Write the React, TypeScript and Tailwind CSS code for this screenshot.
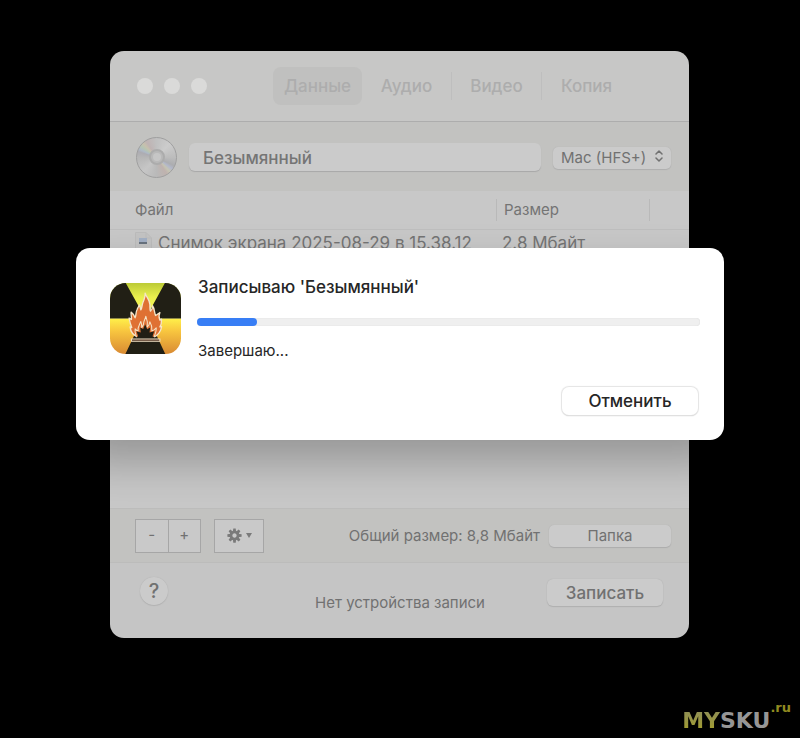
import clsx from "clsx";

const TABS = ["Данные", "Аудио", "Видео", "Копия"];

const FlameIcon = () => (
  <svg viewBox="20 20 212 212" className="h-[71px] w-[71px] shrink-0" aria-hidden="true">
    <defs>
      <clipPath id="tile">
        <rect x="20" y="20" width="212" height="212" rx="47" />
      </clipPath>
      <linearGradient id="lime" x1="0" y1="0" x2="0" y2="1">
        <stop offset="0" stopColor="#bccb36" />
        <stop offset="0.4" stopColor="#e9ef4e" />
        <stop offset="1" stopColor="#fdf85c" />
      </linearGradient>
      <linearGradient id="amber" x1="0" y1="0" x2="0" y2="1">
        <stop offset="0" stopColor="#fff04a" />
        <stop offset="0.35" stopColor="#f8c63f" />
        <stop offset="1" stopColor="#d98a33" />
      </linearGradient>
    </defs>
    <g clipPath="url(#tile)">
      <rect x="20" y="20" width="212" height="106" fill="url(#lime)" />
      <rect x="20" y="126" width="212" height="106" fill="url(#amber)" />
      <path d="M20 20H67L126 126H20ZM232 20H184L126 126H232ZM126 106L66 232H185Z" fill="#211f15" />
      <path
        d="M125 50C128 62 138 69 139 83C140 91 138 97 141 104C145 101 147 95 147 88C153 96 152 107 156 117C160 115 164 111 169 108C165 116 166 124 169 131L174 128C174 139 173 145 169 151L174 150C172 165 163 176 149 183H107C89 177 81 166 80 151L85 153C81 144 79 136 77 125L84 129C85 121 82 115 83 107C90 112 93 118 95 124C99 115 96 108 101 99C103 93 106 90 108 85L112 100C116 95 115 87 118 79C122 70 126 61 125 50Z"
        fill="#df7133"
        stroke="#f5e5c9"
        strokeWidth="4"
        strokeLinejoin="round"
      />
      <path
        d="M100 185C98 176 93 169 95 157C98 161 101 163 104 163C102 151 108 145 112 135C115 142 114 148 115 153C118 148 121 144 121 137C122 129 126 127 127 119C131 129 133 139 131 152C135 149 138 143 139 136C144 144 146 151 145 163C150 162 154 159 158 154C159 165 154 175 150 185Z"
        fill="#df7133"
        stroke="#f5e5c9"
        strokeWidth="3"
        strokeLinejoin="round"
      />
      <path d="M90 188L104 179L99 164L112 168L110 153L119 157L125 143L131 158L140 153L138 168L152 164L147 179L162 188Z" fill="#211f15" />
      <path d="M84 187H169V194H84Z" fill="#4a2c1c" stroke="#f5e5c9" strokeWidth="3" />
    </g>
  </svg>
);

const DiscIcon = () => (
  <div className="flex h-[41px] w-[41px] shrink-0 items-center justify-center rounded-full border border-[#9f9f9f] bg-[conic-gradient(from_0deg,#c0c0c0,#cccccc_12%,#bcbcbc_25%,#acadb0_32%,#b3b8ca_35%,#c5c4b3_38%,#bfb2ae_41%,#b9b9b9_50%,#c6c6c6_62%,#b6b6b6_75%,#adacb2_80%,#aeb9c6_82%,#b6c4b3_85%,#c7c0ad_88%,#bfb3b3_91%,#c0c0c0)]">
    <div className="flex h-4 w-4 items-center justify-center rounded-full border-2 border-[#acacac] bg-[#b9b9b9]">
      <div className="h-2 w-2 rounded-full bg-[#c6c6c6]" />
    </div>
  </div>
);

const GearIcon = () => (
  <svg viewBox="-10 -10 20 20" className="h-[15px] w-[15px]" aria-hidden="true">
    <g fill="#7a7a7a">
      {[0, 45, 90, 135, 180, 225, 270, 315].map((angle) => (
        <path key={angle} d="M-1.6 -9.5H1.6L2.2 -5H-2.2Z" transform={`rotate(${angle})`} />
      ))}
    </g>
    <circle r="4.7" fill="none" stroke="#7a7a7a" strokeWidth="3.6" />
  </svg>
);

const Toolbar = () => (
  <header className="flex h-[71px] items-center border-b border-[#adadad] bg-[#c7c7c6] pl-[27px]">
    <div className="flex gap-[11px]">
      {["Закрыть", "Свернуть", "Развернуть"].map((label) => (
        <button key={label} aria-label={label} className="h-4 w-4 rounded-full bg-[#dadad9]" />
      ))}
    </div>
    <nav className="ml-[66px] flex items-center">
      {TABS.map((tab, i) => (
        <div key={tab} className="flex items-center">
          {i > 1 && <span className="h-7 w-px bg-[#bebebe]" />}
          <button
            className={clsx(
              "h-[38px] w-[89px] rounded-lg pt-px text-[17px] font-medium text-[#adadad]",
              i === 0 && "bg-[#c0c0bf]",
            )}
          >
            {tab}
          </button>
        </div>
      ))}
    </nav>
  </header>
);

const DiscBar = () => (
  <div className="flex h-[69px] items-center gap-3 bg-[#c2c2c0] pl-[26px] pr-[18px] pt-px">
    <DiscIcon />
    <input
      aria-label="Имя диска"
      defaultValue="Безымянный"
      className="h-7 min-w-0 flex-1 rounded-md bg-[#cbcbcb] px-[14px] pt-px text-[17px] font-medium text-[#757575] shadow-[0_1px_1px_#a8a8a8] outline-none"
    />
    <div className="relative">
      <select
        aria-label="Файловая система"
        className="h-[22px] w-[118px] appearance-none rounded-[5px] bg-[#cbcbcb] pl-2 text-[15px] leading-5 text-[#717171] shadow-[0_0_1px_#aaaaaa,0_1px_1px_#b0b0b0]"
      >
        <option>Mac (HFS+)</option>
      </select>
      <svg viewBox="0 0 8 12" className="pointer-events-none absolute right-2 top-[5px] h-3 w-2" aria-hidden="true">
        <path d="M1 4L4 1L7 4M1 8L4 11L7 8" fill="none" stroke="#717171" strokeWidth="1.5" strokeLinecap="round" strokeLinejoin="round" />
      </svg>
    </div>
  </div>
);

const FileTable = () => (
  <div className="h-[317px] bg-[#c8c8c8]">
    <table className="w-full table-fixed border-collapse text-left text-[#747474]">
      <thead className="h-[38px] border-b border-[#bebebe] text-[15px]">
        <tr>
          <th className="pl-[25px] font-normal">Файл</th>
          <th className="w-[153px] p-0 font-normal">
            <div className="flex h-[22px] items-center border-l border-[#b9b9b9] pl-[7px] leading-5">Размер</div>
          </th>
          <th className="w-10 p-0">
            <div className="h-[22px] border-l border-[#b9b9b9]" />
          </th>
        </tr>
      </thead>
      <tbody className="text-[17px] leading-6">
        <tr>
          <td className="pl-[25px] pt-px">
            <div className="flex items-center gap-[6px] whitespace-nowrap">
              <svg viewBox="0 0 17 22" className="h-[22px] w-[17px]" aria-hidden="true">
                <path d="M0.5 0.5H11L16.5 6V21.5H0.5Z" fill="#c4c4c4" stroke="#bcbcbc" />
                <path d="M11 0.5V6H16.5" fill="none" stroke="#bcbcbc" />
                <path d="M4 6H12V10H4Z" fill="#a3b0c5" />
                <path d="M4 10H12V12H4Z" fill="#68727e" />
              </svg>
              Снимок экрана 2025-08-29 в 15.38.12
            </div>
          </td>
          <td className="pl-[6px] pt-px">2.8 Мбайт</td>
          <td />
        </tr>
      </tbody>
    </table>
  </div>
);

const ActionBar = () => (
  <div className="flex h-[55px] items-center border-y border-[#bcbcbb] bg-[#c2c2c0] pl-[25px] pr-[18px] text-[#717171]">
    <div className="flex h-[34px] w-[66px] divide-x divide-[#a6a6a6] border border-[#a6a6a6] bg-[#c9c9c9] text-[15px]">
      <button aria-label="Удалить" className="flex-1">-</button>
      <button aria-label="Добавить" className="flex-1">+</button>
    </div>
    <button
      aria-label="Действия"
      className="ml-[13px] flex h-[34px] w-[50px] items-center justify-center gap-1 border border-[#a6a6a6] bg-[#c9c9c9]"
    >
      <GearIcon />
      <svg viewBox="0 0 6 5" className="h-[5px] w-[6px]" aria-hidden="true">
        <path d="M0 0H6L3 5Z" fill="#7a7a7a" />
      </svg>
    </button>
    <p className="ml-auto text-[15px] leading-5">Общий размер: 8,8 Мбайт</p>
    <button className="ml-[9px] h-[22px] w-[122px] rounded-[5px] bg-[#cbcbcb] text-[15px] leading-5 shadow-[0_0_1px_#aaaaaa,0_1px_1px_#adadad]">
      Папка
    </button>
  </div>
);

const Footer = () => (
  <footer className="flex h-[75px] items-start bg-[#c5c5c5] pl-[30px] pr-[26px] pt-[14px] text-[#717171]">
    <button
      aria-label="Справка"
      className="h-7 w-7 rounded-full bg-[#cbcbcb] text-xl font-medium leading-7 shadow-[0_0_1px_#aaaaaa,0_1px_1px_#b4b4b4]"
    >
      ?
    </button>
    <p className="ml-auto pt-4 text-[15px] leading-5">Нет устройства записи</p>
    <button className="ml-[62px] mt-[2px] h-[27px] w-[116px] rounded-md bg-[#cbcbcb] text-[17px] font-medium leading-6 shadow-[0_0_1px_#aaaaaa,0_1px_1px_#b0b0b0]">
      Записать
    </button>
  </footer>
);

const BurnDialog = ({ progress }: { progress: number }) => (
  <section
    role="dialog"
    aria-labelledby="burn-title"
    className="absolute -left-[34px] -right-[35px] top-[197px] flex h-[192px] gap-4 rounded-[14px] bg-white pl-[34px] pr-6 pt-[35px] text-[#262626] shadow-[0_22px_44px_rgba(0,0,0,0.25)]"
  >
    <FlameIcon />
    <div className="min-w-0 flex-1">
      <h1 id="burn-title" className="-mt-2 pl-px text-[17px] font-medium leading-6">
        Записываю 'Безымянный'
      </h1>
      <div
        role="progressbar"
        aria-labelledby="burn-title"
        aria-valuenow={progress}
        className="mt-[19px] h-2 rounded-full bg-[#efefef] shadow-[inset_0_0_1px_#c8c8c8]"
      >
        <div className="h-2 rounded-full bg-[#387ef5]" style={{ width: `${progress}%` }} />
      </div>
      <p className="mt-[15px] pl-px text-[15px] leading-5">Завершаю...</p>
      <div className="mt-[26px] flex justify-end pr-[2px]">
        <button className="h-7 w-[136px] rounded-[7px] bg-white text-[17px] font-medium leading-6 shadow-[0_0_1px_1px_#e4e4e4,0_1px_1px_#bcbcbc]">
          Отменить
        </button>
      </div>
    </div>
  </section>
);

export default function App() {
  return (
    <div className="relative min-h-screen bg-black py-[51px] pl-[110px] pr-[111px] font-['Inter','Liberation_Sans',sans-serif]">
      <main className="relative">
        <div className="overflow-hidden rounded-[14px]">
          <Toolbar />
          <DiscBar />
          <FileTable />
          <ActionBar />
          <Footer />
        </div>
        <BurnDialog progress={12} />
      </main>
      <div className="absolute bottom-[5px] right-[9px] flex items-start font-['DejaVu_Sans',sans-serif] font-bold text-[#969696]">
        <span className="pt-[7px] text-[22px] leading-6">
          <span className="bg-gradient-to-b from-[#8c8c58] to-[#a59f20] bg-clip-text text-transparent">MY</span>SKU
        </span>
        <span className="text-[13px] leading-3 text-[#918b20]">.ru</span>
      </div>
    </div>
  );
}
